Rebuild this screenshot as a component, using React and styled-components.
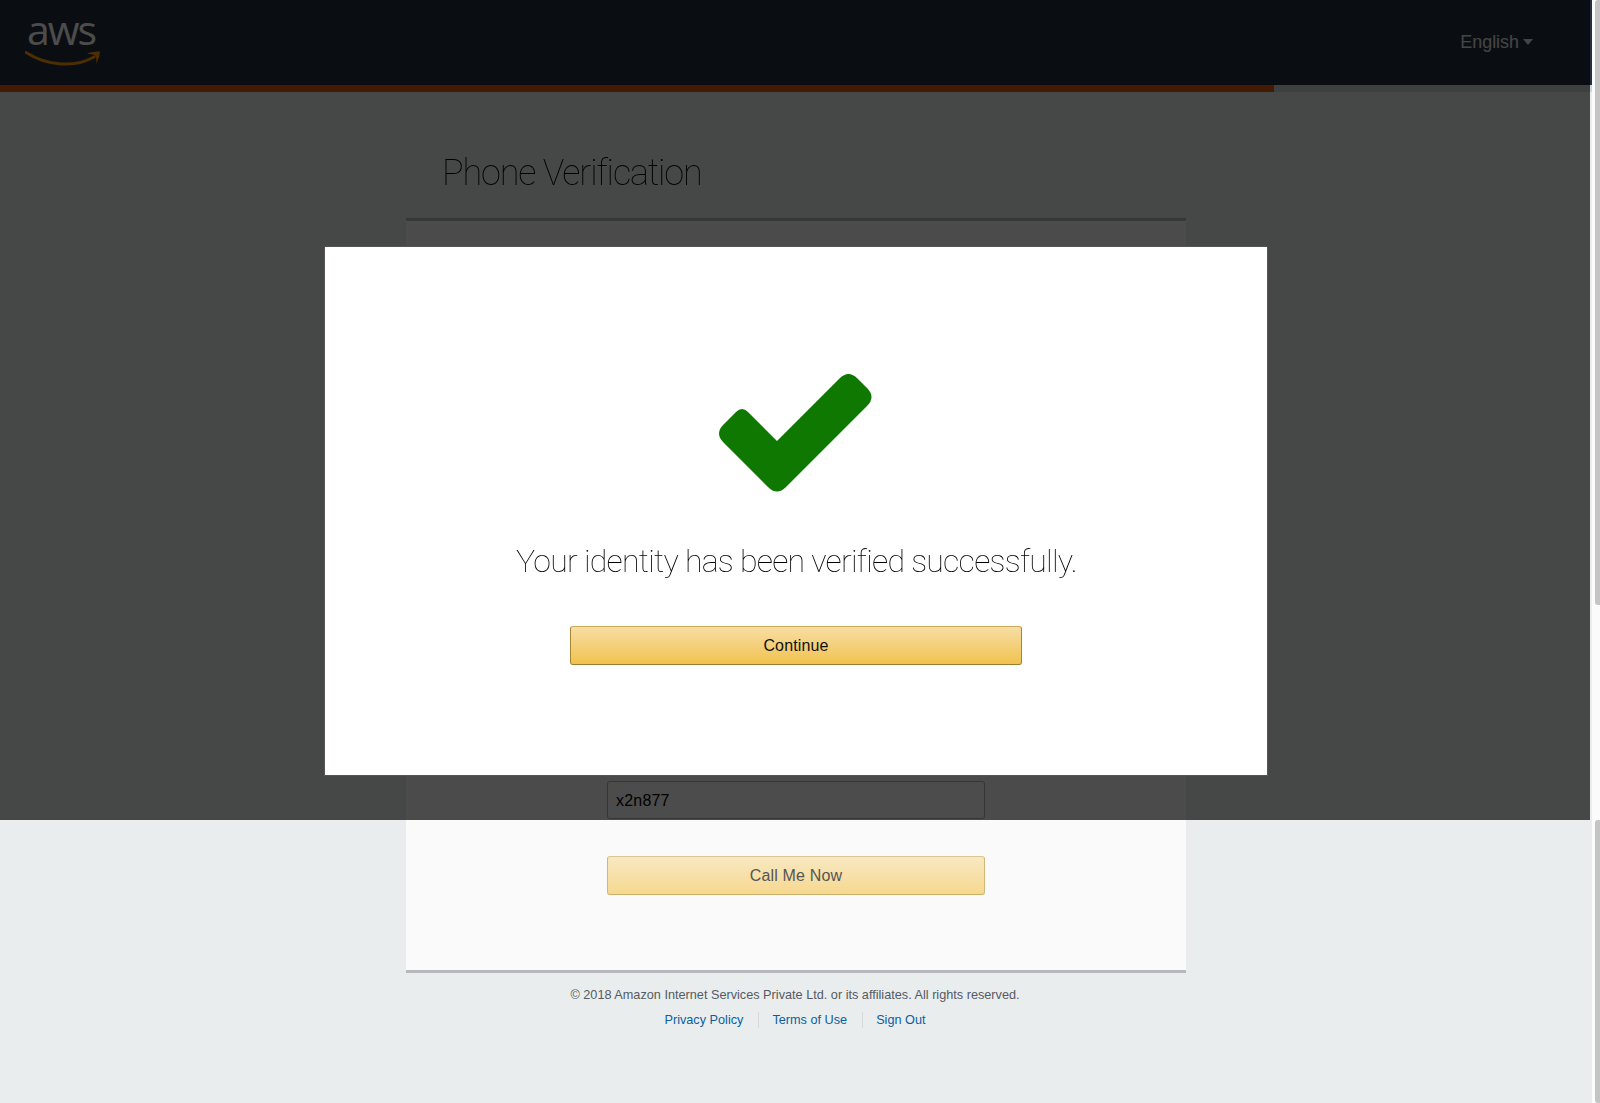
import React from 'react';
import styled, { createGlobalStyle } from 'styled-components';

const GlobalStyle = createGlobalStyle`
  html, body {
    margin: 0;
    padding: 0;
    background: #fbfbfb;
    font-family: "Liberation Sans", Arial, sans-serif;
  }
`;

const Viewport = styled.div`
  display: flex;
  width: 1600px;
  height: 1103px;
  overflow: hidden;
`;

const Page = styled.div`
  position: relative;
  flex: 0 0 1592px;
  background: #e9edee;
`;

// Header and progress strip
const Header = styled.header`
  display: flex;
  align-items: center;
  justify-content: space-between;
  height: 85px;
  padding: 0 59px 0 25px;
  background: #232f3e;
`;

const Language = styled.div`
  display: flex;
  align-items: center;
  gap: 4px;
  font-size: 17.9px;
  color: #e4e8e8;
`;

const Caret = styled.span`
  width: 0;
  height: 0;
  margin-top: -2px;
  border-left: 5.5px solid transparent;
  border-right: 5.5px solid transparent;
  border-top: 6px solid #e4e8e8;
`;

const ProgressTrack = styled.div`
  height: 7px;
  background: #cfd4d4;
`;

const ProgressFill = styled.div`
  height: 100%;
  background: #e05c10;
`;

// Verification panel behind the overlay
const Content = styled.main`
  width: 780px;
  margin: 0 auto;
`;

const Title = styled.h1`
  margin: 0;
  padding: 57px 0 21px 36px;
  font-family: Roboto, sans-serif;
  font-size: 36px;
  line-height: 48px;
  font-weight: 100;
  letter-spacing: -1.15px;
  color: #000;
  will-change: transform;
`;

const Panel = styled.section`
  display: flex;
  flex-direction: column;
  align-items: center;
  height: 755px;
  box-sizing: border-box;
  padding-top: 560px;
  background: #fafafa;
  border-top: 3px solid #b6b9b9;
  border-bottom: 3px solid #b6b9b9;
`;

const CodeInput = styled.input`
  box-sizing: border-box;
  width: 378px;
  height: 38px;
  padding: 1px 8px 0;
  border: 1px solid #aab7b8;
  border-radius: 3px;
  background: #fff;
  font-family: inherit;
  font-size: 16px;
  letter-spacing: 0.2px;
  color: #000;
`;

const GoldButton = styled.button`
  box-sizing: border-box;
  display: block;
  width: ${(props) => props.width};
  height: 39px;
  margin-top: ${(props) => props.top || '0'};
  border: 1px solid;
  border-radius: 3px;
  font-family: inherit;
  font-size: 16px;
  letter-spacing: 0.15px;
`;

const PrimaryButton = styled(GoldButton)`
  border-color: #cba957 #a88734 #9c7e31;
  background: linear-gradient(#f8dea5, #f0c24f);
  color: #111;
`;

const FadedButton = styled(GoldButton)`
  border-color: #dcc68f #d2b877 #cdb06a;
  background: linear-gradient(#f8e8c2, #f6d88f);
  color: #555;
`;

const Footer = styled.footer`
  padding: 14px 2px 0 0;
  text-align: center;
  font-size: 12.7px;
  color: #545b64;
`;

const Copyright = styled.p`
  margin: 0;
  line-height: 16px;
`;

const FooterLinks = styled.nav`
  display: flex;
  justify-content: center;
  margin-top: 9px;
`;

const FooterLink = styled.a`
  padding: 0 ${(props) => (props.$last ? '0' : '15px')} 0 ${(props) => (props.$first ? '0' : '13px')};
  border-right: ${(props) => (props.$last ? 'none' : '1px solid #d5dbdb')};
  line-height: 16px;
  color: #0b5f9f;
  text-decoration: none;
`;

// Dimmed layer and dialog
const Overlay = styled.div`
  position: absolute;
  top: 0;
  left: 0;
  right: 2px;
  height: 820px;
  padding-top: 246px;
  box-sizing: border-box;
  background: rgba(0, 0, 0, 0.7);
`;

const Modal = styled.div`
  box-sizing: border-box;
  display: flex;
  flex-direction: column;
  align-items: center;
  width: 944px;
  height: 530px;
  margin-left: 324px;
  padding-top: 126px;
  background: #fff;
  border: 1px solid #555;
`;

const Message = styled.p`
  margin: 48px 0 0;
  font-family: Roboto, sans-serif;
  font-size: 32px;
  line-height: 44px;
  font-weight: 100;
  letter-spacing: -0.73px;
  color: #000;
  will-change: transform;
`;

// Browser scrollbar strip on the right edge
const ScrollRail = styled.div`
  display: flex;
  flex-direction: column;
  justify-content: space-between;
  flex: 1;
  align-items: flex-end;
  background: #fbfbfb;
`;

const ScrollThumb = styled.div`
  width: 5px;
  height: ${(props) => props.size};
  background: #c4c4c4;
  border-radius: 3px 0 0 3px;
`;

const AwsLogo = () => (
  <svg width="78" height="85" viewBox="0 -8 78 85">
    <text x="2" y="37" fontFamily="'Open Sans', sans-serif" fontSize="41" fontWeight="500" fill="#fff" textLength="70">aws</text>
    <path d="M1 44.5 C 22 58, 50 60, 69 49" fill="none" stroke="#f90" strokeWidth="3" strokeLinecap="round" />
    <path d="M62 45.5 C 66 44, 71 43.5, 75 43.5 C 75 47, 73 52, 71 56 C 71.5 52, 71.5 49, 70 47.5 C 68 46.5, 65 46, 62 45.5 Z" fill="#f90" />
  </svg>
);

const BigCheck = () => (
  <svg width="152" height="118" viewBox="1 0 152 118" overflow="visible">
    <path
      d="M4.5 51.5 L17 39 Q23 33 29 39 L58 68 L120.5 5.5 Q129.5 -3.5 138.5 5.5 L148 15 Q157 24 148 33 L67 114 Q58 123 49 114 L4.5 69.5 Q-4.5 60.5 4.5 51.5 Z"
      fill="#0e7800"
    />
  </svg>
);

const App = () => (
  <Viewport>
    <GlobalStyle />
    <Page>
      <Header>
        <AwsLogo />
        <Language>
          English
          <Caret />
        </Language>
      </Header>
      <ProgressTrack>
        <ProgressFill style={{ width: '80%' }} />
      </ProgressTrack>
      <Content>
        <Title>Phone Verification</Title>
        <Panel>
          <CodeInput readOnly value="x2n877" />
          <FadedButton width="378px" top="37px">Call Me Now</FadedButton>
        </Panel>
        <Footer>
          <Copyright>© 2018 Amazon Internet Services Private Ltd. or its affiliates. All rights reserved.</Copyright>
          <FooterLinks>
            <FooterLink $first href="#">Privacy Policy</FooterLink>
            <FooterLink href="#">Terms of Use</FooterLink>
            <FooterLink $last href="#">Sign Out</FooterLink>
          </FooterLinks>
        </Footer>
      </Content>
      <Overlay>
        <Modal>
          <BigCheck />
          <Message>Your identity has been verified successfully.</Message>
          <PrimaryButton width="452px" top="43px">Continue</PrimaryButton>
        </Modal>
      </Overlay>
    </Page>
    <ScrollRail>
      <ScrollThumb size="605px" />
      <ScrollThumb size="283px" />
    </ScrollRail>
  </Viewport>
);

export default App;
